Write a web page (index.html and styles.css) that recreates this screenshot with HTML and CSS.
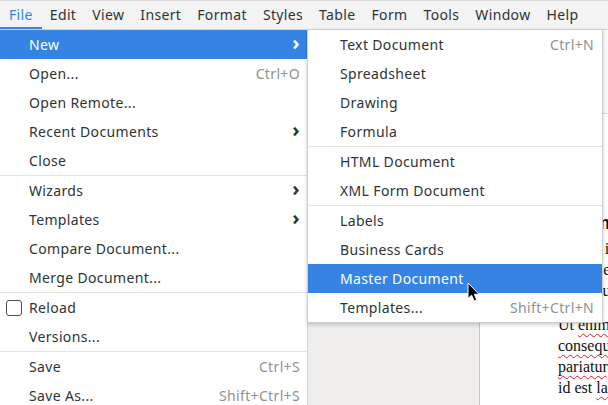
FILE: index.html
```html
<!DOCTYPE html>
<html lang="en">
<head>
    <meta charset="UTF-8">
    <meta name="viewport" content="width=device-width, initial-scale=1.0">
    <title>Writer - File menu</title>
    <link rel="stylesheet" href="styles.css">
</head>
<body>
    <div class="window">
        <nav class="menubar">
            <span class="menubar-item active">File</span>
            <span class="menubar-item">Edit</span>
            <span class="menubar-item">View</span>
            <span class="menubar-item">Insert</span>
            <span class="menubar-item">Format</span>
            <span class="menubar-item">Styles</span>
            <span class="menubar-item">Table</span>
            <span class="menubar-item">Form</span>
            <span class="menubar-item">Tools</span>
            <span class="menubar-item">Window</span>
            <span class="menubar-item">Help</span>
        </nav>

        <div class="workspace">
            <div class="ruler-band"></div>
            <div class="doc-area">
                <div class="doc-margin"></div>
                <div class="page">
                    <div class="page-heading">Lorem Ipsum Dolor</div>
                    <p class="para">
                        <span class="line">Lorem ipsum dolor sit amet,</span>
                        <span class="line">sed do eiusmod tempor</span>
                        <span class="line">incididunt ut labore et dolore</span>
                    </p>
                    <p class="para">
                        <span class="line">Ut <span class="spell">enim</span> ad minim veniam, quis</span>
                        <span class="line"><span class="spell">consequat</span>. Duis aute irure</span>
                        <span class="line"><span class="spell">pariatur</span>. Excepteur sint</span>
                        <span class="line">id est <span class="spell">laborum</span>.</span>
                    </p>
                </div>
            </div>
        </div>

        <!-- File menu -->
        <div class="menu file-menu">
            <div class="menu-row selected"><span>New</span><span class="chevron">&#x203A;</span></div>
            <div class="menu-row"><span>Open...</span><span class="accel">Ctrl+O</span></div>
            <div class="menu-row"><span>Open Remote...</span></div>
            <div class="menu-row"><span>Recent Documents</span><span class="chevron">&#x203A;</span></div>
            <div class="menu-row"><span>Close</span></div>
            <div class="menu-sep"></div>
            <div class="menu-row"><span>Wizards</span><span class="chevron">&#x203A;</span></div>
            <div class="menu-row"><span>Templates</span><span class="chevron">&#x203A;</span></div>
            <div class="menu-row"><span>Compare Document...</span></div>
            <div class="menu-row"><span>Merge Document...</span></div>
            <div class="menu-sep"></div>
            <div class="menu-row"><span class="check"></span><span>Reload</span></div>
            <div class="menu-row"><span>Versions...</span></div>
            <div class="menu-sep"></div>
            <div class="menu-row"><span>Save</span><span class="accel">Ctrl+S</span></div>
            <div class="menu-row"><span>Save As...</span><span class="accel">Shift+Ctrl+S</span></div>
        </div>

        <!-- New submenu -->
        <div class="menu submenu">
            <div class="menu-row"><span>Text Document</span><span class="accel">Ctrl+N</span></div>
            <div class="menu-row"><span>Spreadsheet</span></div>
            <div class="menu-row"><span>Drawing</span></div>
            <div class="menu-row"><span>Formula</span></div>
            <div class="menu-sep"></div>
            <div class="menu-row"><span>HTML Document</span></div>
            <div class="menu-row"><span>XML Form Document</span></div>
            <div class="menu-sep"></div>
            <div class="menu-row"><span>Labels</span></div>
            <div class="menu-row"><span>Business Cards</span></div>
            <div class="menu-row selected"><span>Master Document</span></div>
            <div class="menu-row"><span>Templates...</span><span class="accel">Shift+Ctrl+N</span></div>
        </div>

        <svg class="pointer" width="14" height="21" viewBox="0 0 14 21">
            <path d="M1 1 L1 16.5 L4.6 13.2 L7.2 19 L9.8 17.9 L7.3 12.3 L12 12.3 Z" fill="#000" stroke="#fff" stroke-width="1" stroke-linejoin="round"/>
        </svg>
    </div>
</body>
</html>
```

FILE: styles.css
```css
body {
    margin: 0;
    font-family: "Noto Sans", sans-serif;
    font-size: 14px;
    letter-spacing: 0.35px;
    color: #2e3436;
}
.window {
    position: relative;
    width: 608px;
    height: 405px;
    overflow: hidden;
    background-color: #f6f5f4;
}

/* menubar */
.menubar {
    box-sizing: border-box;
    height: 30px;
    display: flex;
    border-top: 1px solid #d9d9d9;
    border-bottom: 1px solid #d5d3d1;
    background-color: #f3f3f3;
}
.menubar-item {
    display: flex;
    align-items: center;
    padding: 0 8px 1px;
}
.menubar-item:first-child {
    padding: 0 9px 1px;
}
.menubar-item.active {
    color: #3584e4;
    box-shadow: inset 0 -2px 0 #3584e4;
}

/* document behind the menus */
.workspace {
    height: 375px;
    display: flex;
    flex-direction: column;
}
.ruler-band {
    flex-shrink: 0;
    height: 83px;
    background-color: #fafafa;
    border-bottom: 1px solid #d8d8d8;
}
.doc-area {
    flex: 1;
    min-height: 0;
    display: flex;
    background-color: #efeeed;
}
.doc-margin {
    width: 479px;
    border-right: 1px solid #c4c4c4;
}
.page {
    flex: 1;
    background-color: #fff;
    padding: 97px 0 0 78px;
    font-family: "Liberation Serif", serif;
    font-size: 16px;
    letter-spacing: 0;
    color: #111;
    white-space: nowrap;
    overflow: hidden;
}
.page-heading {
    font-family: "Liberation Sans", sans-serif;
    font-weight: bold;
    font-size: 19px;
    line-height: 24px;
    margin-bottom: 3px;
}
.para {
    margin: 0 0 13px;
    line-height: 21px;
}
.line {
    display: block;
}
.spell {
    text-decoration: underline wavy #e01b24;
    text-decoration-thickness: 1px;
    text-underline-offset: 3px;
}

/* popup menus */
.menu {
    position: absolute;
    box-sizing: border-box;
    background-color: #fff;
}
.file-menu {
    left: 0;
    top: 30px;
    width: 308px;
    border-right: 1px solid #d4d2d0;
}
.submenu {
    left: 307px;
    top: 29px;
    width: 296px;
    border: 1px solid #cfcdcb;
    box-shadow: 0 2px 4px rgba(0,0,0,0.18);
}
.menu-row {
    height: 29px;
    display: flex;
    align-items: center;
    justify-content: space-between;
    padding: 0 7px 0 29px;
    position: relative;
}
.submenu .menu-row {
    padding: 0 8px 0 32px;
}
.menu-row.selected {
    background-color: #3584e4;
    color: #fff;
}
.menu-sep {
    height: 1px;
    background-color: #e3e2e1;
}
.accel {
    color: #8f9191;
}
.chevron {
    font-size: 20px;
    font-weight: bold;
    line-height: 1;
    margin-top: -3px;
}
.check {
    position: absolute;
    left: 6px;
    top: 7px;
    box-sizing: border-box;
    width: 16px;
    height: 16px;
    border: 1px solid #4a4f50;
    border-radius: 3px;
}
.pointer {
    position: absolute;
    left: 467px;
    top: 282px;
}
```
